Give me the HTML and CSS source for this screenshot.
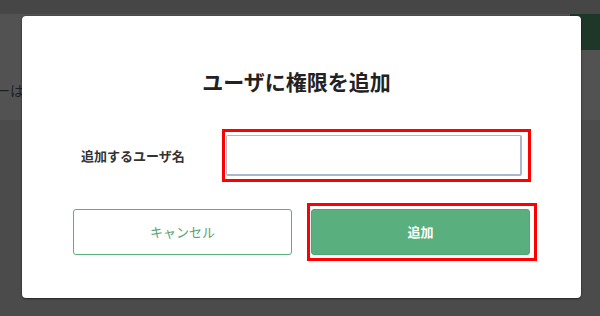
FILE: index.html
```html
<!DOCTYPE html>
<html lang="ja">
<head>
<meta charset="utf-8">
<link rel="stylesheet" href="styles.css">
</head>
<body>
<div class="page">
  <div class="topbar"></div>
  <div class="band">
    <span class="bg-text">ーは</span>
    <div class="green-block"></div>
  </div>
  <div class="lower"></div>
</div>

<div class="modal">
  <h1 class="title">ユーザに権限を追加</h1>
  <div class="form-row">
    <label class="label" for="user">追加するユーザ名</label>
    <input class="input" id="user" type="text">
  </div>
  <div class="actions">
    <button class="btn btn-cancel">キャンセル</button>
    <button class="btn btn-add">追加</button>
  </div>
</div>

<div class="mark mark-input"></div>
<div class="mark mark-add"></div>
</body>
</html>
```

FILE: styles.css
```css
* { box-sizing: border-box; }
html, body {
  margin: 0;
  padding: 0;
  width: 600px;
  height: 316px;
  overflow: hidden;
  background: #4a4a4a;
  font-family: "Noto Sans CJK JP", "Noto Sans", sans-serif;
}
.page {
  display: flex;
  flex-direction: column;
  height: 316px;
}
.topbar {
  height: 14px;
  background: #464646;
}
.band {
  position: relative;
  height: 106px;
  background: #525252;
}
.bg-text {
  position: absolute;
  left: -4px;
  top: 66px;
  font-size: 14px;
  line-height: 20px;
  color: #1e1e1e;
}
.green-block {
  position: absolute;
  right: 0;
  top: 0;
  width: 30px;
  height: 36px;
  background: #1f3729;
}
.lower {
  flex: 1;
  background: #4b4b4b;
}
.modal {
  position: absolute;
  left: 22px;
  top: 16px;
  width: 559px;
  height: 282px;
  background: #fff;
  border-radius: 4px;
  box-shadow: 0 1px 2px rgba(0,0,0,0.5), 0 0 1px rgba(0,0,0,0.6);
  padding: 50px 51px 0;
  display: flex;
  flex-direction: column;
}
.title {
  margin: 0;
  font-size: 21px;
  line-height: 30px;
  font-weight: 700;
  color: #222;
  text-align: center;
  padding-right: 10px;
}
.form-row {
  display: flex;
  align-items: center;
  margin-top: 39px;
}
.label {
  width: 153px;
  padding-left: 8px;
  font-size: 13px;
  font-weight: 700;
  color: #333;
}
.input {
  width: 296px;
  height: 41px;
  border: 1px solid #a9b8cc;
  border-right-width: 2px;
  border-bottom-width: 2px;
  border-radius: 2px;
  background: #fff;
  outline: none;
}
.actions {
  display: flex;
  gap: 19px;
  margin-top: 33px;
}
.btn {
  width: 219px;
  height: 46px;
  border-radius: 3px;
  font-family: inherit;
  font-size: 13px;
  line-height: 20px;
  padding: 0;
}
.btn-cancel {
  background: #fff;
  border: 1px solid #5bb07f;
  color: #5a9f74;
  font-weight: 400;
}
.btn-add {
  background: #5aaf7e;
  border: 1px solid #52a674;
  color: #fff;
  font-weight: 700;
}
.mark {
  position: absolute;
  border: 3px solid #ff0000;
}
.mark-input {
  left: 222px;
  top: 129px;
  width: 309px;
  height: 53px;
}
.mark-add {
  left: 307px;
  top: 203px;
  width: 230px;
  height: 58px;
}
```
